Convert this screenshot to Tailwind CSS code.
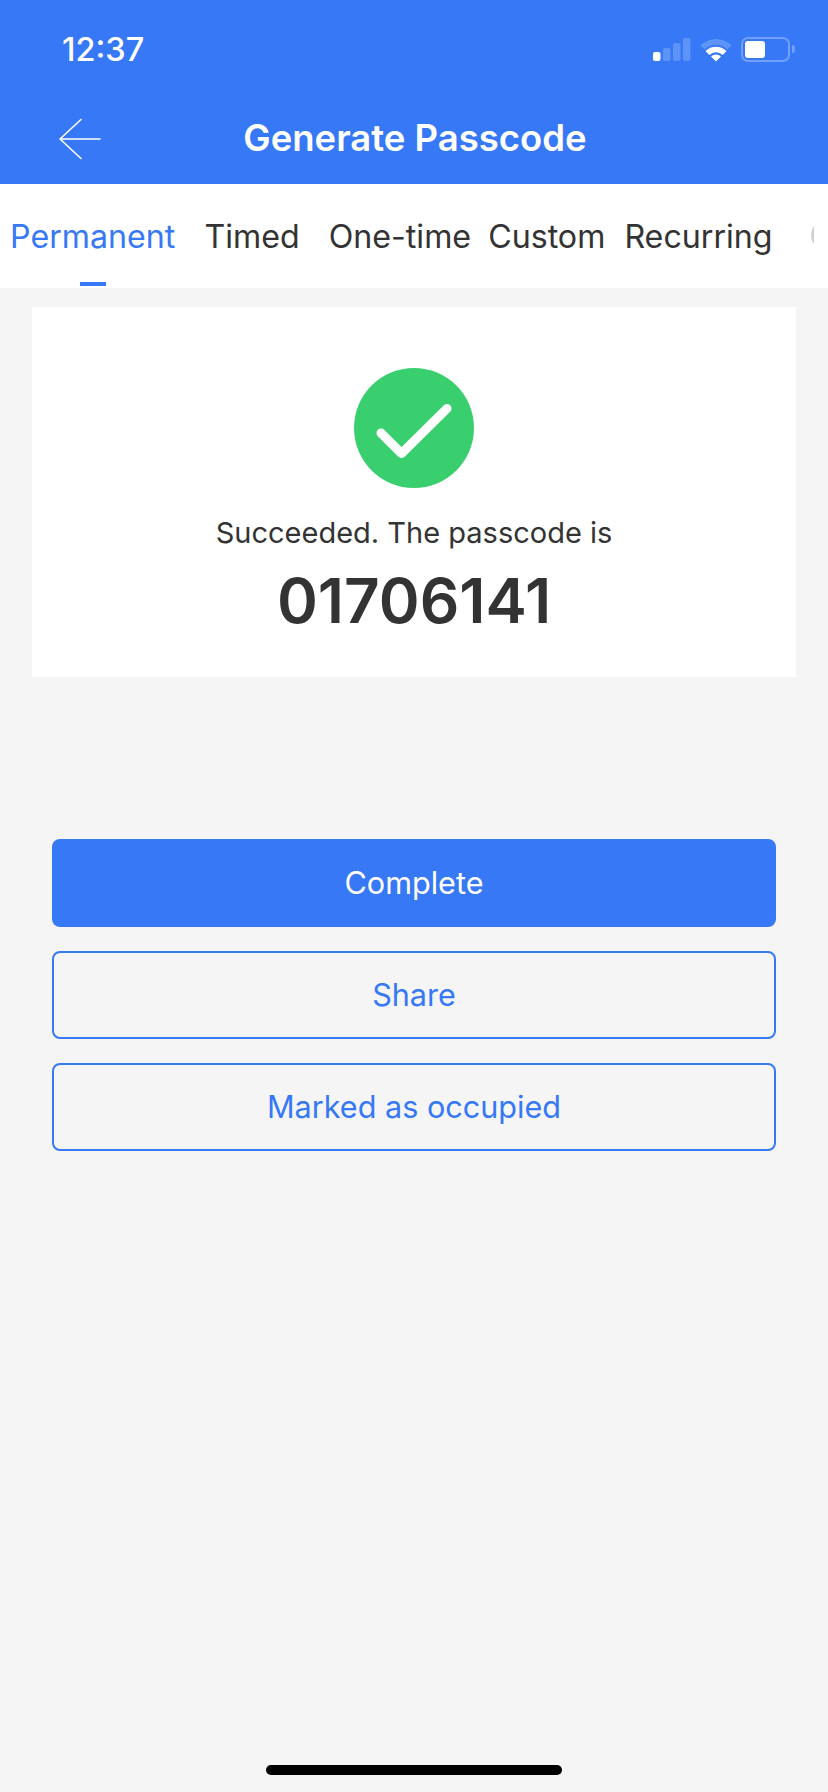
<!DOCTYPE html>
<html><head><meta charset="utf-8">
<script src="https://cdn.jsdelivr.net/npm/@tailwindcss/browser@4"></script>
</head>
<body class="m-0">
<div class="w-[828px] h-[1792px] bg-[#f5f5f5] overflow-hidden flex flex-col font-['Inter',sans-serif] text-[#333333] relative">
  <header class="bg-[#3678f6] h-[184px] shrink-0 flex flex-col text-white">
    <div class="h-[100px] flex items-start justify-between">
      <span class="ml-[62px] mt-[30px] text-[32.5px] leading-[40px] font-medium">12:37</span>
      <div class="flex items-start mt-[37px] mr-[33px]">
        <svg width="38" height="24" viewBox="0 0 38 24" class="mr-[9px] mt-[1px]">
          <rect x="0" y="14" width="7.5" height="9" rx="2" fill="#fff"/>
          <rect x="10" y="10" width="7.5" height="13" rx="2" fill="#fff" fill-opacity=".2"/>
          <rect x="20" y="5" width="7.5" height="18" rx="2" fill="#fff" fill-opacity=".2"/>
          <rect x="30" y="0" width="7.5" height="23" rx="2" fill="#fff" fill-opacity=".2"/>
        </svg>
        <svg width="32" height="25" viewBox="0 0 32 25" class="mr-[9px]">
          <path d="M0.5 8.5 A22 22 0 0 1 31.5 8.5 L27.5 12.5 A16.5 16.5 0 0 0 4.5 12.5 Z" fill="#fff" fill-opacity=".2"/>
          <path d="M5.5 14 A15 15 0 0 1 26.5 14 L22.6 18 A9.5 9.5 0 0 0 9.4 18 Z" fill="#fff"/>
          <path d="M11 19.5 A7.5 7.5 0 0 1 21 19.5 L16 24.5 Z" fill="#fff"/>
        </svg>
        <div class="w-[49px] h-[25px] rounded-[7px] border-[2px] border-white/30 p-[2px]">
          <div class="h-full bg-white rounded-[3px] w-[20px]"></div>
        </div>
        <div class="w-[3px] h-[8px] mt-[8px] ml-[2px] bg-white/30 rounded-r-[3px]"></div>
      </div>
    </div>
    <div class="h-[84px] relative flex items-start justify-center">
      <svg width="44" height="44" viewBox="0 0 44 44" class="absolute left-[58px] top-[17px]" fill="none" stroke="#fff" stroke-width="1.6" stroke-linecap="round" stroke-linejoin="round">
        <path d="M2 22 H42 M23 2.5 L2 22 L23 41.5"/>
      </svg>
      <h1 class="mt-[15px] ml-[2px] text-[36.5px] leading-[46px] font-semibold">Generate Passcode</h1>
    </div>
  </header>

  <nav class="bg-white h-[104px] shrink-0 flex items-start text-[32.2px] leading-[40px] relative">
    <div class="ml-[10px] mt-[33px] relative text-[#3678f6] h-[71px]">Permanent
      <div class="absolute left-[70px] bottom-[2px] w-[26px] h-[4px] bg-[#3678f6]"></div>
    </div>
    <span class="ml-[29px] mt-[33px]">Timed</span>
    <span class="ml-[29px] mt-[33px]">One-time</span>
    <span class="ml-[17px] mt-[33px]">Custom</span>
    <span class="ml-[19px] mt-[33px]">Recurring</span>
    <div class="absolute left-[811px] top-[36px] w-[3px] h-[30px] overflow-hidden">
      <div class="w-[30px] h-[30px] rounded-full border-[3px] border-[#cfcfcf]"></div>
    </div>
  </nav>

  <section class="bg-white mx-[32px] mt-[19px] h-[370px] flex flex-col items-center shrink-0">
    <svg width="120" height="120" viewBox="0 0 120 120" class="mt-[61px]">
      <circle cx="60" cy="60" r="60" fill="#3acf6e"/>
      <path d="M27 65 L47.5 85.5 L93 40.5" fill="none" stroke="#fff" stroke-width="9" stroke-linecap="round" stroke-linejoin="round"/>
    </svg>
    <p class="mt-[27px] text-[29px] leading-[36px]">Succeeded. The passcode is</p>
    <p class="mt-[12px] text-[62px] leading-[76px] font-semibold">01706141</p>
  </section>

  <div class="mx-[52px] mt-[162px] flex flex-col gap-[24px] text-[30.6px]">
    <button class="h-[88px] rounded-[8px] bg-[#3678f6] text-white">Complete</button>
    <button class="h-[88px] rounded-[8px] border-2 border-[#3678f6] text-[#3678f6]">Share</button>
    <button class="h-[88px] rounded-[8px] border-2 border-[#3678f6] text-[#3678f6]">Marked as occupied</button>
  </div>

  <div class="absolute left-[266px] bottom-[17px] w-[296px] h-[10px] rounded-full bg-black"></div>
</div>
</body></html>
